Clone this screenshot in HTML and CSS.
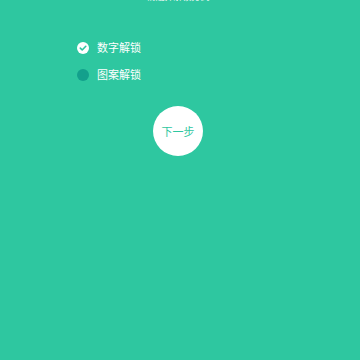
FILE: index.html
```html
<!DOCTYPE html>
<html lang="zh-CN">
<head>
    <meta charset="UTF-8">
    <meta name="viewport" content="width=device-width, initial-scale=1.0">
    <title>解锁方式</title>
    <link rel="stylesheet" href="styles.css">
</head>
<body>
    <div class="page">
        <div class="title">请选择解锁方式</div>
        <div class="options">
            <div class="option">
                <span class="radio checked">
                    <svg width="12" height="12" viewBox="0 0 12 12">
                        <circle cx="6" cy="6" r="6" fill="#fff"/>
                        <path d="M3.3 6.1 L5.2 8 L8.8 4.3" fill="none" stroke="#2ec7a0" stroke-width="1.6" stroke-linecap="round" stroke-linejoin="round"/>
                    </svg>
                </span>
                <span class="label">数字解锁</span>
            </div>
            <div class="option">
                <span class="radio"></span>
                <span class="label">图案解锁</span>
            </div>
        </div>
        <button class="next">下一步</button>
    </div>
</body>
</html>
```

FILE: styles.css
```css
html, body {
    margin: 0;
    height: 100%;
    background-color: #2ec7a0;
}

.page {
    font-family: "Noto Sans CJK SC", "Noto Sans", sans-serif;
    color: #fff;
}

.title {
    margin-top: -9px;
    height: 12px;
    line-height: 12px;
    font-size: 9px;
    text-align: center;
    padding-right: 4px;
    opacity: 0.9;
}

.options {
    display: flex;
    flex-direction: column;
    gap: 14px;
    padding-left: 77px;
    margin-top: 38px;
}

.option {
    display: flex;
    align-items: center;
    height: 13px;
}

.radio {
    display: block;
    width: 12px;
    height: 12px;
    border-radius: 50%;
    background-color: #13a08c;
}

.radio.checked {
    background-color: transparent;
}

.radio svg {
    display: block;
}

.label {
    margin-left: 8px;
    font-size: 11px;
    line-height: 13px;
}

.next {
    display: block;
    width: 50px;
    height: 50px;
    margin: 25px 0 0 153px;
    padding: 0;
    border: none;
    border-radius: 50%;
    background-color: #fff;
    color: #2ec7a0;
    font-family: "Noto Sans CJK SC", sans-serif;
    font-size: 11px;
}
```
